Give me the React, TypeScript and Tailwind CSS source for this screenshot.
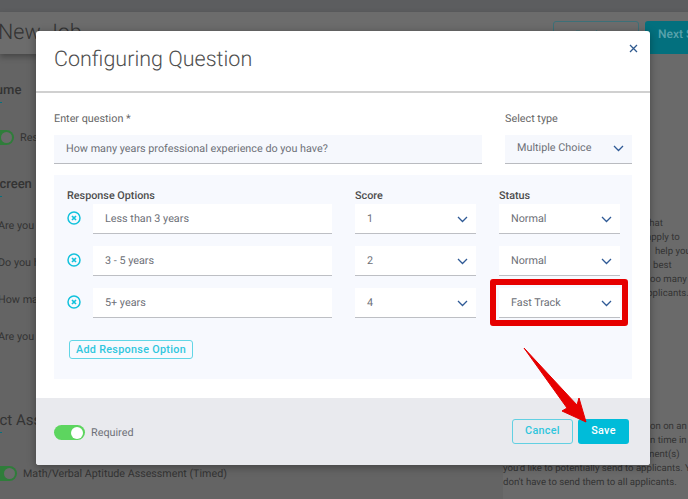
import React from 'react';

const Chevron = () => (
  <svg width="11" height="7" viewBox="0 0 11 7" fill="none" stroke="#2f5a96" strokeWidth="1.3">
    <path d="M1 1l4.5 4.5L10 1" />
  </svg>
);

const RemoveIcon = () => (
  <svg width="14" height="14" viewBox="0 0 14 14" fill="none" stroke="#12c2dc">
    <circle cx="7" cy="7" r="6" strokeWidth="1.5" />
    <path d="M5 5l4 4M9 5l-4 4" strokeWidth="1.7" />
  </svg>
);

const BgToggle = () => (
  <div className="w-[34px] h-[15px] rounded-full bg-[#2f7d3a] flex items-center justify-end pr-[2px] shrink-0">
    <div className="w-[11px] h-[11px] rounded-full bg-[#6b6b6b]" />
  </div>
);

const Underline = () => <div className="w-[2px] h-[1px] bg-[#06717f]" />;

function Select({ value, className }: { value: string; className: string }) {
  return (
    <div className={`flex items-center justify-between pl-[12px] pr-[8px] text-[10.8px] text-[#6d7077] ${className}`}>
      <span>{value}</span>
      <Chevron />
    </div>
  );
}

const rows = [
  { text: 'Less than 3 years', score: '1', status: 'Normal' },
  { text: '3 - 5 years', score: '2', status: 'Normal' },
  { text: '5+ years', score: '4', status: 'Fast Track' },
];

export default function App() {
  return (
    <div className="relative w-full h-[499px] overflow-hidden bg-[#646464] font-['Roboto',sans-serif] [text-rendering:geometricPrecision]">
      {/* page behind the dialog */}
      <div className="h-3 bg-[#5c5d5f]" />
      <div className="h-[42px] bg-[#6c6c6c] flex items-center justify-between overflow-hidden shadow-[0_3px_6px_rgba(0,0,0,0.3)]">
        <span className="-ml-[2px] text-[21.5px] font-light text-[#333]">New Job</span>
        <div className="flex gap-[6px] self-end h-[33px] -mr-[49px]">
          <div className="w-[86px] rounded-t-[3px] border border-[#3c7078] text-[12px] pt-[4px] pl-[14px] text-[#3c7078]">‹ Back</div>
          <div className="w-[92px] rounded-t-[3px] bg-[#03707e] pl-[13px] pt-[4px] text-[12px] font-medium whitespace-nowrap text-[#58a2ac]">Next Step</div>
        </div>
      </div>
      <div className="relative flex justify-between h-[445px]">
        <div className="pt-[27px] text-[#333]">
          <div className="-ml-[26px] text-[13px] font-medium leading-[20px]">Resume</div>
          <div className="mt-[1px]"><Underline /></div>
          <div className="flex items-center gap-[6px] -ml-[20px] mt-[27px] text-[10.8px] leading-[15px]"><BgToggle />Resume</div>
          <div className="-ml-[27px] text-[13px] font-medium leading-[20px] mt-[30px]">Prescreen</div>
          <div className="mt-[1px]"><Underline /></div>
          <div className="flex flex-col gap-[20px] mt-[20px] -ml-[2px] text-[10.8px] leading-[17px] whitespace-nowrap">
            <div>Are you legally</div>
            <div>Do you have</div>
            <div>How many</div>
            <div>Are you</div>
          </div>
          <div className="text-[15px] leading-[22px] mt-[64px] -ml-[29px] whitespace-nowrap">Select Assessment</div>
          <div className="mt-[1px]"><Underline /></div>
          <div className="flex items-center gap-[6px] -ml-[17px] mt-[33px] text-[10.7px] leading-[15px] whitespace-nowrap"><BgToggle />Math/Verbal Aptitude Assessment (Timed)</div>
        </div>
        <div className="w-[185px] shrink-0 bg-[#6a6a6a] text-[9.6px] leading-[14px] text-[#333] pt-[163px]">
          <div className="pl-[143px]">that</div>
          <div className="pl-[143px]">apply to</div>
          <div className="pl-[152px] whitespace-nowrap">help you</div>
          <div className="pl-[150px]">best</div>
          <div className="pl-[144px] whitespace-nowrap">too many</div>
          <div className="pl-[139px] whitespace-nowrap">applicants.</div>
          <div className="mt-[119px] pl-[147px] whitespace-nowrap">on on an</div>
          <div className="pl-[147px] whitespace-nowrap">n time in</div>
          <div className="pl-[143px] whitespace-nowrap">ment(s)</div>
          <div className="whitespace-nowrap">you'd like to potentially send to applicants. You</div>
          <div className="whitespace-nowrap">don't have to send them to all applicants.</div>
        </div>
      </div>

      {/* dialog */}
      <div className="absolute left-[36px] top-[31px] w-[614px] h-[434px] rounded-[3px] bg-white flex flex-col overflow-hidden shadow-[0_2px_8px_rgba(0,0,0,0.35)]">
        <div className="relative h-[62px] shrink-0 border-b-2 border-[#d0d0d0] pl-[18px] pt-[13px]">
          <h2 className="text-[21.5px] leading-[32px] font-light text-[#4f4f4f]">Configuring Question</h2>
          <svg className="absolute right-[12px] top-[13px]" width="9" height="9" viewBox="0 0 9 9" fill="none" stroke="#2f5a8f" strokeWidth="1.3">
            <path d="M1 1l7 7M8 1l-7 7" />
          </svg>
        </div>

        <div className="flex-1 px-[18px] pt-[17px]">
          <div className="flex gap-[23px]">
            <div className="w-[428px]">
              <label className="block text-[10.8px] leading-[18px] text-[#666]">Enter question *</label>
              <div className="mt-[7px] h-[29px] bg-[#f6f8fd] border-b border-[#b9bbc0] pl-[12px] text-[10.8px] leading-[28px] text-[#6d7077]">
                How many years professional experience do you have?
              </div>
            </div>
            <div className="w-[127px]">
              <label className="block text-[10.8px] leading-[18px] text-[#666]">Select type</label>
              <Select value="Multiple Choice" className="mt-[7px] h-[29px] pb-[1px] bg-[#f6f8fd] border-b border-[#b9bbc0]" />
            </div>
          </div>

          <div className="mt-[11px] h-[204px] bg-[#f7f9fe] pl-[13px] pt-[13px]">
            <div className="flex text-[10.8px] leading-[15px] font-medium text-[#4d4d4d]">
              <div className="w-[288px]">Response Options</div>
              <div className="w-[144px]">Score</div>
              <div>Status</div>
            </div>
            <div className="mt-[1px] flex flex-col gap-[12px]">
              {rows.map((row, i) => (
                <div key={row.text} className="flex items-center h-[30px]">
                  <div className="w-[26px] -mt-[3px]"><RemoveIcon /></div>
                  <div className="w-[239px] h-[30px] bg-white border-b border-[#bdbfc4] pl-[12px] text-[10.8px] leading-[30px] text-[#6d7077]">{row.text}</div>
                  <Select value={row.score} className="ml-[23px] w-[121px] h-[30px] pt-[1px] bg-white border-b border-[#bdbfc4]" />
                  <div className="relative ml-[23px] w-[121px]">
                    <Select value={row.status} className="h-[30px] pt-[1px] bg-white border-b border-[#bdbfc4]" />
                    {i === 2 && <div className="absolute -left-[9px] -right-[8px] -top-[9px] -bottom-[8px] rounded-[3px] border-[6px] border-[#e60000]" />}
                  </div>
                </div>
              ))}
            </div>
            <button className="mt-[22px] ml-[2px] w-[124px] h-[19px] rounded-[3px] border border-[#62d6e6] text-[10.8px] leading-[16px] font-medium tracking-[0.3px] text-[#2fc6dd]">
              Add Response Option
            </button>
          </div>
        </div>

        <div className="h-[67px] shrink-0 bg-[#e9eaee] flex items-center justify-between pl-[18px] pr-[21px]">
          <div className="mt-[2px] flex items-center gap-[6px] text-[10.8px] text-[#6d7077]">
            <div className="w-[31px] h-[15px] rounded-full bg-[#5dd55f] flex items-center justify-end pr-[2px]">
              <div className="w-[12px] h-[12px] rounded-full bg-white" />
            </div>
            <span className="pt-[1px]">Required</span>
          </div>
          <div className="flex gap-[5px]">
            <button className="w-[61px] h-[25px] rounded-[3px] border border-[#62d0e2] text-[10.8px] font-medium tracking-[0.3px] text-[#2fc6dd]">Cancel</button>
            <button className="w-[51px] h-[25px] rounded-[3px] bg-[#00bcd9] text-[10.8px] font-medium tracking-[0.3px] text-white">Save</button>
          </div>
        </div>
      </div>

      {/* annotation arrow */}
      <svg className="absolute left-[520px] top-[344px]" width="72" height="84" viewBox="520 344 72 84" fill="#e60000" stroke="#e60000" strokeWidth="1" strokeLinejoin="round">
        <polygon points="524,348 577,405 579,398 586,422 562,411 567,408" />
      </svg>
    </div>
  );
}
